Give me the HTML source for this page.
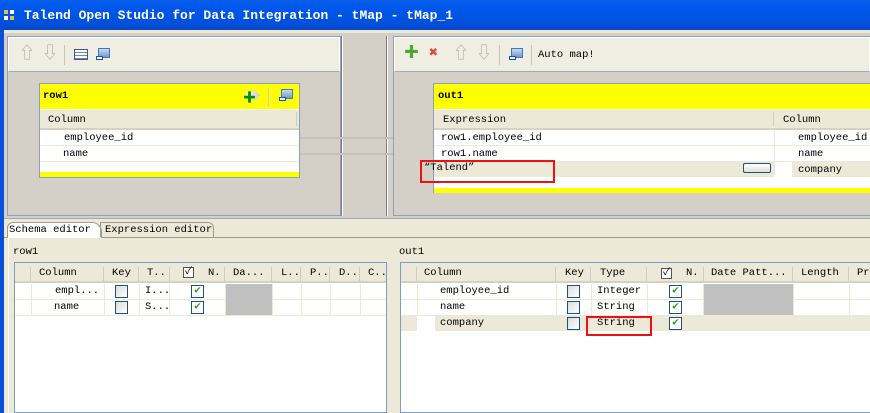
<!DOCTYPE html>
<html><head><style>
*{margin:0;padding:0;box-sizing:border-box}
body{width:870px;height:413px;overflow:hidden;background:#D4D0C8;font-family:"Liberation Mono","Noto Sans CJK SC",monospace;font-size:10.5px;color:#000;position:relative}
.a{position:absolute}
.t{position:absolute;white-space:nowrap;line-height:16px}
.cb{position:absolute;width:13px;height:13px;border:1px solid #1C5180;background:linear-gradient(135deg,#DCDCD7,#fff)}
.ck{position:absolute;width:13px;height:13px;border:1px solid #1C5180;background:#fff;color:#21A121;font-size:11px;line-height:11px;text-align:center;font-weight:bold}
.vl{position:absolute;width:1px;background:#ECE9D8}
.hl{position:absolute;height:1px;background:#ECE9D8}
</style></head><body>
<div class="a" style="left:0;top:0;width:870px;height:30px;background:linear-gradient(#0A5FE8,#0058EE 20%,#0050DC 80%,#0A47C8)"></div>
<div class="a" style="left:4px;top:10px;width:4px;height:4px;background:#E8C040"></div>
<div class="a" style="left:10px;top:10px;width:4px;height:4px;background:#fff"></div>
<div class="a" style="left:4px;top:16px;width:4px;height:4px;background:#fff"></div>
<div class="a" style="left:10px;top:16px;width:4px;height:4px;background:#E8C040"></div>
<div class="t" style="left:24px;top:8px;color:#fff;font-weight:bold;font-size:13px">Talend Open Studio for Data Integration - tMap - tMap_1</div>
<div class="a" style="left:0;top:30px;width:4px;height:383px;background:#0A4FD8"></div>
<div class="a" style="left:4px;top:30px;width:866px;height:3px;background:#ECE9D8"></div>
<div class="a" style="left:7px;top:36px;width:334px;height:180px;border:1px solid #8CA0B8;background:#D4D0C8"></div>
<div class="a" style="left:8px;top:37px;width:332px;height:35px;background:#F0EEE2;border:1px solid #fff;border-bottom-color:#A0AAB8"></div>
<div class="t" style="left:19px;top:46px;color:#B0AEA0;font-size:16px">⇧</div>
<div class="t" style="left:42px;top:46px;color:#B0AEA0;font-size:16px">⇩</div>
<div class="a" style="left:64px;top:45px;width:1px;height:20px;background:#C8C4B4"></div>
<div class="a" style="left:74px;top:49px;width:14px;height:11px;border:1px solid #3C5A8C;background:repeating-linear-gradient(#fff 0 2px,#6C88B4 2px 3px)"></div>
<div class="a" style="left:98px;top:48px;width:12px;height:10px;border:1px solid #3C78C8;background:linear-gradient(#C8D8F0,#7898C8)"></div>
<div class="a" style="left:96px;top:56px;width:7px;height:4px;border:1px solid #1050C0;background:#fff"></div>
<div class="a" style="left:341px;top:36px;width:1px;height:180px;background:#808080"></div>
<div class="a" style="left:342px;top:36px;width:1px;height:180px;background:#fff"></div>
<div class="a" style="left:386px;top:36px;width:1px;height:180px;background:#808080"></div>
<div class="a" style="left:387px;top:36px;width:1px;height:180px;background:#fff"></div>
<div class="a" style="left:39px;top:83px;width:261px;height:95px;border:1px solid #8CA0B8;background:#fff"></div>
<div class="a" style="left:40px;top:84px;width:259px;height:25px;background:#FFFF00"></div>
<div class="t" style="left:43px;top:88px;font-weight:bold">row1</div>
<div class="a" style="left:246px;top:89px;width:14px;height:13px;background:linear-gradient(90deg,#fff,#ccc);clip-path:polygon(0 25%,55% 25%,55% 0,100% 50%,55% 100%,55% 75%,0 75%)"></div>
<div class="t" style="left:243px;top:91px;color:#0A8A0A;font-weight:bold;font-size:13px">✚</div>
<div class="a" style="left:268px;top:88px;width:1px;height:18px;background:#ccc"></div>
<div class="a" style="left:281px;top:89px;width:12px;height:10px;border:1px solid #3C78C8;background:linear-gradient(#C8D8F0,#7898C8)"></div>
<div class="a" style="left:279px;top:97px;width:7px;height:4px;border:1px solid #1050C0;background:#fff"></div>
<div class="a" style="left:40px;top:110px;width:259px;height:20px;background:#ECE9D8;border-bottom:2px solid #D6D2C2"></div>
<div class="t" style="left:48px;top:112px">Column</div>
<div class="a" style="left:296px;top:112px;width:1px;height:14px;background:#ccc"></div>
<div class="t" style="left:64px;top:130px">employee_id</div>
<div class="hl" style="left:40px;top:145px;width:259px"></div>
<div class="t" style="left:63px;top:146px">name</div>
<div class="hl" style="left:40px;top:161px;width:259px"></div>
<div class="a" style="left:40px;top:172px;width:259px;height:5px;background:#FFFF00"></div>
<div class="a" style="left:300px;top:137px;width:133px;height:2px;background:#C4C2B6"></div>
<div class="a" style="left:300px;top:153px;width:133px;height:2px;background:#C4C2B6"></div>
<div class="a" style="left:393px;top:36px;width:477px;height:180px;border:1px solid #8CA0B8;border-right:none;background:#D4D0C8"></div>
<div class="a" style="left:394px;top:37px;width:476px;height:35px;background:#F0EEE2;border:1px solid #fff;border-bottom-color:#A0AAB8"></div>
<div class="t" style="left:404px;top:46px;color:#4CA830;font-weight:bold;font-size:15px">✚</div>
<div class="t" style="left:429px;top:46px;color:#E04848;font-weight:bold;font-size:15px">✖</div>
<div class="t" style="left:453px;top:46px;color:#B0AEA0;font-size:16px">⇧</div>
<div class="t" style="left:476px;top:46px;color:#B0AEA0;font-size:16px">⇩</div>
<div class="a" style="left:499px;top:45px;width:1px;height:20px;background:#C8C4B4"></div>
<div class="a" style="left:511px;top:48px;width:12px;height:10px;border:1px solid #3C78C8;background:linear-gradient(#C8D8F0,#7898C8)"></div>
<div class="a" style="left:509px;top:56px;width:7px;height:4px;border:1px solid #1050C0;background:#fff"></div>
<div class="a" style="left:531px;top:45px;width:1px;height:20px;background:#C8C4B4"></div>
<div class="t" style="left:538px;top:47px">Auto map!</div>
<div class="a" style="left:433px;top:83px;width:437px;height:110px;border:1px solid #8CA0B8;border-right:none;background:#fff"></div>
<div class="a" style="left:434px;top:84px;width:436px;height:25px;background:#FFFF00"></div>
<div class="t" style="left:438px;top:88px;font-weight:bold">out1</div>
<div class="a" style="left:434px;top:110px;width:436px;height:20px;background:#ECE9D8;border-bottom:2px solid #D6D2C2"></div>
<div class="t" style="left:443px;top:112px">Expression</div>
<div class="a" style="left:773px;top:112px;width:1px;height:14px;background:#ccc"></div>
<div class="t" style="left:783px;top:112px">Column</div>
<div class="vl" style="left:774px;top:130px;height:31px"></div>
<div class="t" style="left:441px;top:130px">row1.employee_id</div>
<div class="t" style="left:798px;top:130px">employee_id</div>
<div class="hl" style="left:434px;top:145px;width:436px"></div>
<div class="t" style="left:441px;top:146px">row1.name</div>
<div class="t" style="left:798px;top:146px">name</div>
<div class="a" style="left:434px;top:161px;width:436px;height:16px;background:#ECE9D8"></div>
<div class="a" style="left:775px;top:162px;width:17px;height:15px;background:#fff"></div>
<div class="t" style="left:424px;top:160px">“Talend”</div>
<div class="a" style="left:743px;top:163px;width:28px;height:10px;border:1px solid #1C5180;border-radius:2px;background:linear-gradient(#fff,#E0E0D8)"></div>
<div class="t" style="left:798px;top:162px">company</div>
<div class="a" style="left:434px;top:188px;width:436px;height:5px;background:#FFFF00"></div>
<div class="a" style="left:420px;top:160px;width:135px;height:23px;border:2px solid #F01010"></div>
<div class="a" style="left:4px;top:218px;width:866px;height:195px;background:#ECE9D8;border-top:1px solid #A0AAB8"></div>
<div class="a" style="left:4px;top:237px;width:866px;height:1px;background:#A09C8C"></div>
<div class="a" style="left:7px;top:222px;width:95px;height:16px;background:#fff;border:1px solid #A09C8C;border-bottom:none;border-radius:6px 10px 0 0"></div>
<div class="t" style="left:9px;top:222px">Schema editor</div>
<div class="a" style="left:100px;top:222px;width:114px;height:15px;border:1px solid #A09C8C;border-bottom:none;border-radius:0 6px 0 0"></div>
<div class="t" style="left:105px;top:222px">Expression editor</div>
<div class="a" style="left:8px;top:238px;width:862px;height:175px;background:#ECE9D8;border-left:1px solid #fff"></div>
<div class="t" style="left:13px;top:244px">row1</div>
<div class="t" style="left:399px;top:244px">out1</div>
<div class="a" style="left:14px;top:262px;width:373px;height:151px;border:1px solid #7C9CC4;background:#fff"></div>
<div class="a" style="left:15px;top:263px;width:371px;height:20px;background:#ECE9D8;border-bottom:2px solid #D6D2C2"></div>
<div class="t" style="left:39px;top:265px">Column</div><div class="t" style="left:112px;top:265px">Key</div><div class="t" style="left:147px;top:265px">T..</div>
<div class="a" style="left:183px;top:267px;width:11px;height:11px;border:1px solid #555;background:#fff;font-size:10px;line-height:9px;text-align:center">✓</div>
<div class="t" style="left:208px;top:265px">N.</div><div class="t" style="left:233px;top:265px">Da...</div><div class="t" style="left:281px;top:265px">L..</div><div class="t" style="left:310px;top:265px">P..</div><div class="t" style="left:339px;top:265px">D..</div><div class="t" style="left:368px;top:265px">C..</div>
<div class="a" style="left:30px;top:267px;width:1px;height:14px;background:#ccc"></div><div class="a" style="left:103px;top:267px;width:1px;height:14px;background:#ccc"></div><div class="a" style="left:138px;top:267px;width:1px;height:14px;background:#ccc"></div><div class="a" style="left:169px;top:267px;width:1px;height:14px;background:#ccc"></div><div class="a" style="left:224px;top:267px;width:1px;height:14px;background:#ccc"></div><div class="a" style="left:271px;top:267px;width:1px;height:14px;background:#ccc"></div><div class="a" style="left:300px;top:267px;width:1px;height:14px;background:#ccc"></div><div class="a" style="left:329px;top:267px;width:1px;height:14px;background:#ccc"></div><div class="a" style="left:359px;top:267px;width:1px;height:14px;background:#ccc"></div>
<div class="vl" style="left:31px;top:284px;height:31px"></div><div class="vl" style="left:104px;top:284px;height:31px"></div><div class="vl" style="left:139px;top:284px;height:31px"></div><div class="vl" style="left:169px;top:284px;height:31px"></div><div class="vl" style="left:225px;top:284px;height:31px"></div><div class="vl" style="left:272px;top:284px;height:31px"></div><div class="vl" style="left:301px;top:284px;height:31px"></div><div class="vl" style="left:330px;top:284px;height:31px"></div><div class="vl" style="left:360px;top:284px;height:31px"></div>
<div class="hl" style="left:15px;top:299px;width:371px"></div><div class="hl" style="left:15px;top:315px;width:371px"></div>
<div class="a" style="left:226px;top:284px;width:46px;height:31px;background:#C0C0C0"></div>
<div class="t" style="left:55px;top:283px">empl...</div><div class="t" style="left:54px;top:299px">name</div>
<div class="cb" style="left:115px;top:285px"></div><div class="cb" style="left:115px;top:301px"></div>
<div class="t" style="left:145px;top:283px">I...</div><div class="t" style="left:145px;top:299px">S...</div>
<div class="ck" style="left:191px;top:285px">✔</div><div class="ck" style="left:191px;top:301px">✔</div>
<div class="a" style="left:400px;top:262px;width:470px;height:151px;border:1px solid #7C9CC4;border-right:none;background:#fff"></div>
<div class="a" style="left:401px;top:263px;width:469px;height:20px;background:#ECE9D8;border-bottom:2px solid #D6D2C2"></div>
<div class="a" style="left:416px;top:267px;width:1px;height:14px;background:#ccc"></div>
<div class="t" style="left:424px;top:265px">Column</div>
<div class="a" style="left:555px;top:267px;width:1px;height:14px;background:#ccc"></div><div class="t" style="left:565px;top:265px">Key</div>
<div class="a" style="left:590px;top:267px;width:1px;height:14px;background:#ccc"></div><div class="t" style="left:600px;top:265px">Type</div>
<div class="a" style="left:646px;top:267px;width:1px;height:14px;background:#ccc"></div>
<div class="a" style="left:661px;top:268px;width:11px;height:11px;border:1px solid #555;background:#fff;font-size:10px;line-height:9px;text-align:center">✓</div>
<div class="t" style="left:686px;top:265px">N.</div>
<div class="a" style="left:703px;top:267px;width:1px;height:14px;background:#ccc"></div><div class="t" style="left:711px;top:265px">Date Patt...</div>
<div class="a" style="left:792px;top:267px;width:1px;height:14px;background:#ccc"></div><div class="t" style="left:801px;top:265px">Length</div>
<div class="a" style="left:848px;top:267px;width:1px;height:14px;background:#ccc"></div><div class="t" style="left:857px;top:265px">Pr</div>
<div class="vl" style="left:417px;top:284px;height:31px"></div><div class="vl" style="left:556px;top:284px;height:31px"></div><div class="vl" style="left:591px;top:284px;height:31px"></div><div class="vl" style="left:647px;top:284px;height:31px"></div><div class="vl" style="left:703px;top:284px;height:31px"></div><div class="vl" style="left:793px;top:284px;height:31px"></div><div class="vl" style="left:849px;top:284px;height:31px"></div>
<div class="hl" style="left:401px;top:299px;width:469px"></div>
<div class="a" style="left:401px;top:315px;width:469px;height:16px;background:#ECE9D8"></div>
<div class="a" style="left:417px;top:316px;width:18px;height:15px;background:#fff"></div>
<div class="a" style="left:704px;top:284px;width:89px;height:31px;background:#C0C0C0"></div>
<div class="t" style="left:440px;top:283px">employee_id</div><div class="t" style="left:440px;top:299px">name</div><div class="t" style="left:440px;top:315px">company</div>
<div class="cb" style="left:567px;top:285px"></div><div class="cb" style="left:567px;top:301px"></div><div class="cb" style="left:567px;top:317px"></div>
<div class="t" style="left:597px;top:283px">Integer</div><div class="t" style="left:597px;top:299px">String</div><div class="t" style="left:597px;top:315px">String</div>
<div class="ck" style="left:669px;top:285px">✔</div><div class="ck" style="left:669px;top:301px">✔</div><div class="ck" style="left:669px;top:317px">✔</div>
<div class="a" style="left:586px;top:316px;width:66px;height:20px;border:2px solid #F01010"></div>
</body></html>
